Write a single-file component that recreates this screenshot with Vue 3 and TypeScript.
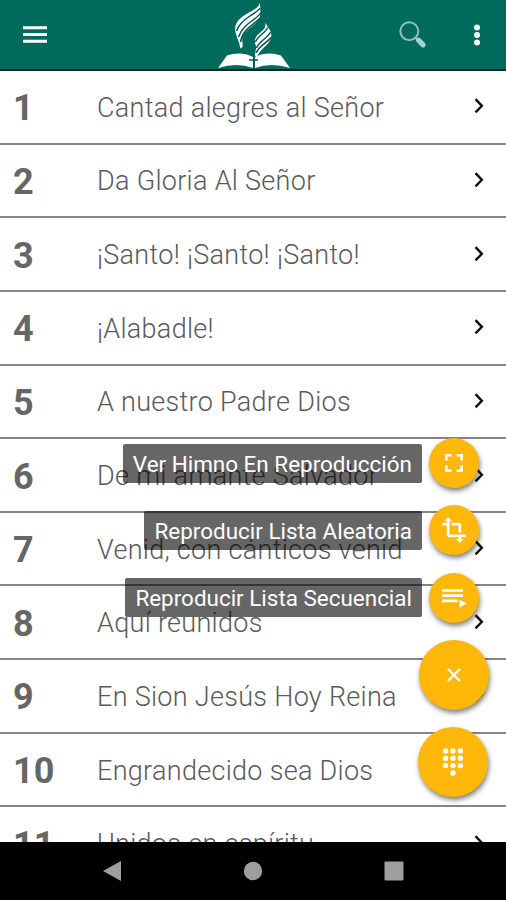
<script setup lang="ts">
interface Hymn {
  id: number
  title: string
}

const hymns: Hymn[] = [
  'Cantad alegres al Señor',
  'Da Gloria Al Señor',
  '¡Santo! ¡Santo! ¡Santo!',
  '¡Alabadle!',
  'A nuestro Padre Dios',
  'De mi amante Salvador',
  'Venid, con cánticos venid',
  'Aquí reunidos',
  'En Sion Jesús Hoy Reina',
  'Engrandecido sea Dios',
  'Unidos en espíritu',
].map((title, i) => ({ id: i + 1, title }))

const actions = [
  { icon: 'expand', label: 'Ver Himno En Reproducción' },
  { icon: 'crop', label: 'Reproducir Lista Aleatoria' },
  { icon: 'queue', label: 'Reproducir Lista Secuencial' },
]

const keypad = [
  [4.6, 5], [12, 5], [19.4, 5],
  [4.6, 12.300], [12, 12.300], [19.4, 12.300],
  [4.6, 19.600], [12, 19.600], [19.4, 19.600],
  [12, 27],
]
</script>

<template>
  <div class="screen">
    <header class="bar">
      <button class="menu" aria-label="Menú">
        <svg width="24" height="18" viewBox="0 0 24 18"><path d="M0 1.8h24M0 8.5h24M0 15.2h24" stroke="#fff" stroke-width="3" /></svg>
      </button>
      <svg class="logo" width="72" height="66" viewBox="0 0 72 66">
        <g fill="#fff">
          <path d="M0 65 9 52.500Q23 48 35 54V65Q19 59 0 65Z" />
          <path d="M72 65 63 52.500Q49 48 37 54V65Q53 59 72 65Z" />
          <path d="M42 0C40 6 33 8 26 12.500C19 17 16 23 17.500 29C19 35 21 38 22.500 45.500C24.500 45 25 43 24.500 40C23.500 33 26 30 32 25C38 20 42 17 42.500 10Z" />
          <path d="M47.500 19.500C48 26 44 28 40.500 31C36 35 36.500 39 38 43C38.500 46 37 49 37 52L38.500 55C40 51 43 47 47 43.500C52 39 54 35 53 30C52 26 49 24 47.500 19.500Z" />
        </g>
        <g fill="none" stroke="#00594d" stroke-width="1.500">
          <path d="M42 5C39 11 23 15 18.500 28" />
          <path d="M43 9.500C39 17 25 20 20.500 34" />
          <path d="M41.500 15.500C36 22 25 25 22.500 39" />
          <path d="M49.500 24.500C49 29 40 32 37.500 39" />
          <path d="M52.500 29C50 35 41 38 38.500 45" />
          <path d="M53 34.500C49 40 42 42 38 50" />
          <path d="M36 54V66M31 57H40" />
        </g>
      </svg>
      <button class="search" aria-label="Buscar">
        <svg width="28" height="28" viewBox="0 0 28 28">
          <circle cx="10.3" cy="10.2" r="9" fill="none" stroke="#8fc0b8" stroke-width="2" />
          <path d="m16.5 16.5 2.5 2.5" stroke="#8fc0b8" stroke-width="2" />
          <path d="m19.5 19.2 4.6 4.6" stroke="#a5d2cb" stroke-width="5.2" stroke-linecap="round" />
        </svg>
      </button>
      <button class="more" aria-label="Más opciones">
        <svg width="8" height="22" viewBox="0 0 8 22"><g fill="#fff"><circle cx="4" cy="3.5" r="3" /><circle cx="4" cy="11" r="3" /><circle cx="4" cy="18.4" r="3" /></g></svg>
      </button>
    </header>

    <main class="list">
      <div v-for="h in hymns" :key="h.id" class="row">
        <span class="number">{{ h.id }}</span>
        <span class="title">{{ h.title }}</span>
        <svg class="chevron" width="10" height="16" viewBox="0 0 10 16"><path d="m1.5 1.2 6.4 6.6-6.4 6.6" fill="none" stroke="#111" stroke-width="2.4" /></svg>
      </div>
    </main>

    <div class="actions">
      <div v-for="a in actions" :key="a.icon" class="action">
        <span class="label">{{ a.label }}</span>
        <button class="fab mini" :aria-label="a.label">
          <svg v-if="a.icon === 'expand'" width="18" height="18" viewBox="0 0 18 18"><path d="M1.3 6.5V1.3h5.2M11.5 1.3h5.2v5.2M16.7 11.5v5.2h-5.2M6.5 16.7H1.3v-5.2" fill="none" stroke="#fff" stroke-width="2.6" /></svg>
          <svg v-else-if="a.icon === 'crop'" width="28" height="28" viewBox="0 0 24 24"><path fill="#fff" stroke="#fff" stroke-width=".3" d="M22 18v-2H8V4h2L7 1 4 4h2v2H2v2h4v8c0 1.100.9 2 2 2h8v2h-2l3 3 3-3h-2v-2h4zM10 8h6v6h2V8c0-1.100-.9-2-2-2h-6v2z" /></svg>
          <svg v-else width="26" height="20" viewBox="0 0 26 20"><path d="M1 2.500h21M1 7.700h21M1 12.900h15.500" stroke="#fff" stroke-width="2.700" /><path d="m18.500 11.400 7 4.100-7 4.200z" fill="#fff" /></svg>
        </button>
      </div>
      <button class="fab close" aria-label="Cerrar">
        <svg width="14" height="14" viewBox="0 0 14 14"><path d="m1 1 12 12M13 1 1 13" stroke="#fff" stroke-width="2.400" /></svg>
      </button>
      <button class="fab dial" aria-label="Teclado">
        <svg width="24" height="31" viewBox="0 0 24 31"><circle v-for="([x, y], i) in keypad" :key="i" :cx="x" :cy="y" r="2.700" fill="#fff" /></svg>
      </button>
    </div>

    <nav class="system">
      <svg width="20" height="22" viewBox="0 0 20 22"><path d="M19 1v20L1 11z" fill="#9e9e9e" /></svg>
      <svg width="20" height="22" viewBox="0 0 20 22"><circle cx="10" cy="11" r="9.200" fill="#9e9e9e" /></svg>
      <svg width="20" height="22" viewBox="0 0 20 22"><rect x=".5" y="1.500" width="19" height="19" rx="1" fill="#9e9e9e" /></svg>
    </nav>
  </div>
</template>

<style>
body {
  margin: 0;
  background: #fff;
}
</style>

<style scoped>
.screen {
  position: relative;
  display: flex;
  flex-direction: column;
  width: 506px;
  height: 900px;
  overflow: hidden;
  background: #fff;
  font-family: Roboto, "Liberation Sans", sans-serif;
}
svg {
  display: block;
  flex: none;
}
button {
  display: block;
  padding: 0;
  border: 0;
  background: none;
}
.bar {
  box-sizing: border-box;
  flex: none;
  display: flex;
  align-items: center;
  height: 71px;
  padding: 0 25px 0 23px;
  border-bottom: 2px solid #06231f;
  background: #006b5c;
}
.logo {
  margin: 3px 0 0 171px;
}
.search {
  margin-left: 109px;
}
.more {
  margin-left: 46px;
}
.list {
  flex: 1;
  min-height: 0;
  overflow: hidden;
}
.row {
  box-sizing: border-box;
  display: flex;
  align-items: center;
  height: 73.650px;
  padding: 3px 22px 0 13px;
  border-bottom: 2px solid #858585;
}
.number {
  width: 84px;
  color: #666;
  font-size: 36px;
  font-weight: 700;
  line-height: 1;
}
.title {
  flex: 1;
  color: #5a5a5a;
  font-size: 27px;
  font-weight: 300;
  letter-spacing: 0.3px;
  line-height: 1;
  white-space: nowrap;
}
.chevron {
  margin-top: -4px;
}
.actions {
  position: absolute;
  top: 438px;
  right: 17px;
  display: flex;
  flex-direction: column;
  align-items: flex-end;
}
.action {
  display: flex;
  align-items: center;
  gap: 7px;
  height: 50px;
  margin: 0 10px 17.300px 0;
}
.label {
  box-sizing: border-box;
  height: 39px;
  padding: 0 10px;
  border-radius: 2px;
  background: rgba(0, 0, 0, 0.6);
  color: #fff;
  font-size: 22.450px;
  line-height: 41px;
  white-space: nowrap;
}
.fab {
  display: flex;
  flex: none;
  align-items: center;
  justify-content: center;
  width: 70px;
  height: 70px;
  border-radius: 50%;
  background: #ffb70a;
  box-shadow: 1px 3px 5px rgba(0, 0, 0, 0.5);
}
.mini {
  width: 50px;
  height: 50px;
}
.dial {
  margin-top: 17px;
  margin-right: 1px;
}
.system {
  flex: none;
  display: flex;
  align-items: center;
  justify-content: space-between;
  height: 58px;
  padding: 0 102px;
  background: #000;
}
</style>
